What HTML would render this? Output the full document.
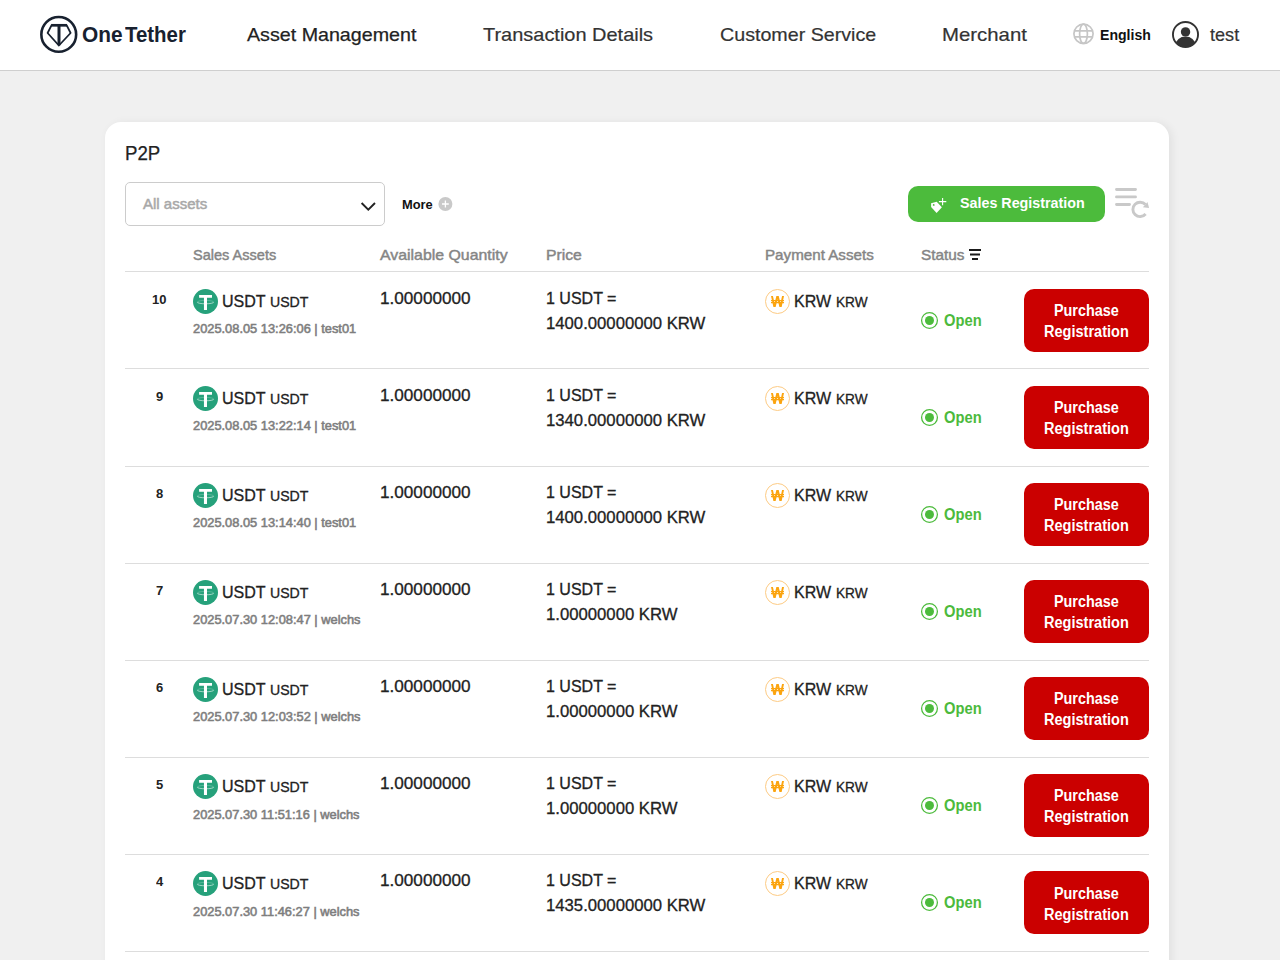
<!DOCTYPE html>
<html lang="en">
<head>
<meta charset="utf-8">
<title>OneTether - P2P</title>
<style>
*{box-sizing:border-box;margin:0;padding:0}
html,body{width:1280px;height:960px;overflow:hidden}
body{background:#f0f0f0;font-family:"Liberation Sans",sans-serif;position:relative}
.t{position:absolute;white-space:nowrap;transform-origin:0 0;display:block}
.abs{position:absolute}
header{position:absolute;left:0;top:0;width:1280px;height:71px;z-index:2;background:#fff;border-bottom:1px solid #cfcfcf}
.card{position:absolute;left:105px;top:122px;width:1064px;height:900px;background:#fff;border-radius:16px;box-shadow:3px 1px 10px rgba(0,0,0,.065)}
.select{position:absolute;left:125px;top:182px;width:260px;height:44px;border:1px solid #ccc;border-radius:5px;background:#fff}
.btn-sale{position:absolute;left:908px;top:186px;width:197px;height:36px;border-radius:10px;background:#4cbb3c}
.hr{position:absolute;left:125px;width:1024px;height:1px;background:#ddd}
.btn-buy{position:absolute;left:1024px;width:125px;height:63px;border-radius:10px;background:#cb0000}
svg{position:absolute;overflow:visible}
</style>
</head>
<body>
<header>
<svg style="left:38px;top:14px" width="42" height="42" viewBox="38 14 42 42"><circle cx="58.75" cy="34.4" r="17.4" fill="none" stroke="#18212f" stroke-width="2.6"/><path d="M51.6 25.2h15l4 7.8-11.7 12.5L47.6 33z" fill="none" stroke="#18212f" stroke-width="1.8" stroke-linejoin="round"/><path d="M51.2 25.3h15.8" fill="none" stroke="#18212f" stroke-width="2.7"/><path d="M59 25v20.2" fill="none" stroke="#18212f" stroke-width="3"/></svg>
<svg style="left:1073px;top:23px" width="22" height="22" viewBox="1073 23 22 22" fill="none" stroke="#c6c6c6" stroke-width="1.7"><circle cx="1083.5" cy="33.8" r="9.6"/><ellipse cx="1083.5" cy="33.8" rx="3.9" ry="9.6"/><path d="M1074.6 30.9h17.8M1074.6 36.8h17.8"/></svg>
<svg style="left:1172px;top:20.6px" width="27" height="27" viewBox="0 0 27 27"><defs><clipPath id="uc"><circle cx="13.5" cy="13.5" r="12.6"/></clipPath></defs><circle cx="13.5" cy="13.5" r="12.55" fill="#fff" stroke="#333" stroke-width="1.9"/><g clip-path="url(#uc)" fill="#333"><circle cx="13.55" cy="10.9" r="4.7"/><ellipse cx="13.5" cy="23.9" rx="9.9" ry="8.4"/></g></svg>
<span class="t logo" style="left:81.73px;top:22px;font-size:21.6px;line-height:25px;transform:scaleX(0.9655);color:#18212f;font-weight:700;">One</span>
<span class="t logo" style="left:124.81px;top:22px;font-size:21.6px;line-height:25px;transform:scaleX(0.9452);color:#18212f;font-weight:700;">Tether</span>
<span class="t nav" style="left:247.00px;top:24px;font-size:19.0px;line-height:21px;transform:scaleX(1.0347);color:#222;-webkit-text-stroke:0.25px #222;">Asset Management</span>
<span class="t nav" style="left:483.33px;top:24px;font-size:19.0px;line-height:21px;transform:scaleX(1.0505);color:#333;-webkit-text-stroke:0.2px #333;">Transaction Details</span>
<span class="t nav" style="left:719.87px;top:24px;font-size:19.0px;line-height:21px;transform:scaleX(1.0347);color:#333;-webkit-text-stroke:0.2px #333;">Customer Service</span>
<span class="t nav" style="left:941.79px;top:24px;font-size:19.0px;line-height:21px;transform:scaleX(1.0719);color:#333;-webkit-text-stroke:0.2px #333;">Merchant</span>
<span class="t lang" style="left:1100.28px;top:26px;font-size:15.3px;line-height:17px;transform:scaleX(0.9211);color:#111;font-weight:700;">English</span>
<span class="t nav" style="left:1209.81px;top:24px;font-size:19.0px;line-height:21px;transform:scaleX(0.9524);color:#333;-webkit-text-stroke:0.2px #333;">test</span>
</header>
<div class="card"></div>
<main>
<section class="toolbar">
<div class="select"></div>
<svg style="left:360px;top:198px" width="16" height="14" viewBox="360 198 16 14"><path d="M361.6 203l6.7 6.7 6.7-6.7" fill="none" stroke="#222" stroke-width="1.9"/></svg>
<svg style="left:438px;top:197px" width="15" height="15" viewBox="0 0 15 15"><circle cx="7.4" cy="7" r="7" fill="#c9c9c9"/><path d="M7.4 3.6v6.8M4 7h6.8" stroke="#fff" stroke-width="1.3"/></svg>
<div class="btn-sale"></div>
<svg style="left:928px;top:196px" width="20" height="18" viewBox="928 196 20 18"><path d="M931.1 203.3l5.6-1.5 5.2 5.5-5.3 5.6-5.5-5.9z" fill="#fff"/><circle cx="933.7" cy="204.9" r=".9" fill="#4cbb3c"/><path d="M942.6 197.9v7.4M938.9 201.6h7.4" stroke="#fff" stroke-width="1.1"/></svg>
<svg style="left:1113px;top:186px" width="38" height="34" viewBox="1113 186 38 34"><path d="M1116.5 189.5h19M1116.5 196.9h19M1116.5 204.5h13" stroke="#c9c9c9" stroke-width="2.9" stroke-linecap="round" fill="none"/><path d="M1145.45 204.58A7.2 7.2 0 1 0 1145.6 214.0" fill="none" stroke="#c9c9c9" stroke-width="2.9"/><path d="M1147.5 201.9l1.6 6.2-6.2-.9z" fill="#c9c9c9"/></svg>
<span class="t title" style="left:125.11px;top:142px;font-size:20.0px;line-height:22px;transform:scaleX(0.9328);color:#222;-webkit-text-stroke:0.25px #222;">P2P</span>
<span class="t ph" style="left:143.10px;top:195px;font-size:15.0px;line-height:17px;transform:scaleX(1.0017);color:#a8a8a8;-webkit-text-stroke:0.5px #a8a8a8;">All assets</span>
<span class="t more" style="left:401.75px;top:197px;font-size:13.7px;line-height:15px;transform:scaleX(0.9391);color:#111;font-weight:700;">More</span>
<span class="t btxt" style="left:960.01px;top:195px;font-size:14.8px;line-height:16px;transform:scaleX(0.9664);color:#fff;font-weight:700;">Sales Registration</span>
</section>
<div class="thead">
<span class="t th" style="left:193.17px;top:246px;font-size:15.0px;line-height:17px;transform:scaleX(0.9690);color:#858585;-webkit-text-stroke:0.45px #858585;">Sales Assets</span>
<span class="t th" style="left:380.30px;top:246px;font-size:15.0px;line-height:17px;transform:scaleX(1.0578);color:#858585;-webkit-text-stroke:0.45px #858585;">Available Quantity</span>
<span class="t th" style="left:546.44px;top:246px;font-size:15.0px;line-height:17px;transform:scaleX(1.0485);color:#858585;-webkit-text-stroke:0.45px #858585;">Price</span>
<span class="t th" style="left:764.69px;top:246px;font-size:15.0px;line-height:17px;transform:scaleX(1.0115);color:#858585;-webkit-text-stroke:0.45px #858585;">Payment Assets</span>
<span class="t th" style="left:921.39px;top:246px;font-size:15.0px;line-height:17px;transform:scaleX(1.0236);color:#858585;-webkit-text-stroke:0.45px #858585;">Status</span>
<svg style="left:968px;top:248px" width="14" height="13" viewBox="968 248 14 13"><path d="M969 250h12M970 254.5h10M972 259h6" stroke="#1a1a1a" stroke-width="2" fill="none"/></svg>
<div class="hr" style="top:271px"></div>
</div>
<div class="row">
<svg style="left:193px;top:289px" width="25" height="25" viewBox="0 0 25 25"><circle cx="12.5" cy="12.5" r="12.5" fill="#26a17b"/><path d="M6.1 6.1h12.9v2.7h-5v12.25h-3.05V8.8H6.1z" fill="#fff"/><path d="M4.2 13.1a8.3 1.7 0 0 0 16.6 0" fill="none" stroke="#fff" stroke-opacity=".7" stroke-width=".8"/><path d="M4.2 13.1a8.3 1.7 0 0 1 16.6 0" fill="none" stroke="#fff" stroke-opacity=".3" stroke-width=".7"/></svg>
<svg style="left:765px;top:289px" width="25" height="25" viewBox="0 0 25 25"><defs><clipPath id="wc0"><rect x="4" y="7" width="17" height="10.9"/></clipPath></defs><circle cx="12.5" cy="12.5" r="12" fill="#fff" stroke="#fdcb84" stroke-width="1"/><g clip-path="url(#wc0)" fill="none" stroke="#fba40f"><path d="M6.5 4.8L9.5 18.6 12.55 6.2 15.55 18.6 18.5 4.8" stroke-width="1.9" stroke-linejoin="miter" stroke-miterlimit="10"/><path d="M6 11.6h13M6 13.65h13" stroke-width="1.3"/></g></svg>
<svg style="left:921px;top:312px" width="17" height="17" viewBox="0 0 17 17"><circle cx="8.5" cy="8.5" r="7.9" fill="#fff" stroke="#4cbb3c" stroke-width="1.25"/><circle cx="8.5" cy="8.5" r="4.5" fill="#4cbb3c"/></svg>
<div class="btn-buy" style="top:289px"></div>
<span class="t idx" style="left:152.09px;top:292px;font-size:12.8px;line-height:15px;transform:scaleX(1.0140);color:#222;font-weight:700;">10</span>
<span class="t a1" style="left:221.99px;top:291px;font-size:17.2px;line-height:20px;transform:scaleX(0.9333);color:#222;-webkit-text-stroke:0.32px #222;">USDT</span>
<span class="t a2" style="left:269.88px;top:293px;font-size:15.3px;line-height:17px;transform:scaleX(0.9228);color:#222;-webkit-text-stroke:0.32px #222;">USDT</span>
<span class="t date" style="left:192.88px;top:322px;font-size:12.4px;line-height:14px;transform:scaleX(1.0360);color:#7e7e7e;-webkit-text-stroke:0.55px #7e7e7e;">2025.08.05 13:26:06 | test01</span>
<span class="t qty" style="left:379.80px;top:288px;font-size:17.2px;line-height:20px;transform:scaleX(0.9977);color:#222;-webkit-text-stroke:0.32px #222;">1.00000000</span>
<span class="t p" style="left:546.49px;top:288px;font-size:17.2px;line-height:20px;transform:scaleX(0.9317);color:#222;-webkit-text-stroke:0.32px #222;">1 USDT =</span>
<span class="t p" style="left:546.44px;top:313px;font-size:17.2px;line-height:20px;transform:scaleX(0.9716);color:#222;-webkit-text-stroke:0.32px #222;">1400.00000000 KRW</span>
<span class="t a1" style="left:793.79px;top:291px;font-size:17.2px;line-height:20px;transform:scaleX(0.9327);color:#222;-webkit-text-stroke:0.32px #222;">KRW</span>
<span class="t a2" style="left:835.63px;top:293px;font-size:15.3px;line-height:17px;transform:scaleX(0.8924);color:#222;-webkit-text-stroke:0.32px #222;">KRW</span>
<span class="t open" style="left:943.84px;top:312px;font-size:15.7px;line-height:17px;transform:scaleX(0.9396);color:#4cba3c;font-weight:700;">Open</span>
<span class="t pb" style="left:1053.99px;top:302px;font-size:15.8px;line-height:17px;transform:scaleX(0.9102);color:#fff;font-weight:700;">Purchase</span>
<span class="t pb" style="left:1044.08px;top:323px;font-size:15.8px;line-height:17px;transform:scaleX(0.9199);color:#fff;font-weight:700;">Registration</span>
<div class="hr" style="top:368px"></div>
</div>
<div class="row">
<svg style="left:193px;top:386px" width="25" height="25" viewBox="0 0 25 25"><circle cx="12.5" cy="12.5" r="12.5" fill="#26a17b"/><path d="M6.1 6.1h12.9v2.7h-5v12.25h-3.05V8.8H6.1z" fill="#fff"/><path d="M4.2 13.1a8.3 1.7 0 0 0 16.6 0" fill="none" stroke="#fff" stroke-opacity=".7" stroke-width=".8"/><path d="M4.2 13.1a8.3 1.7 0 0 1 16.6 0" fill="none" stroke="#fff" stroke-opacity=".3" stroke-width=".7"/></svg>
<svg style="left:765px;top:386px" width="25" height="25" viewBox="0 0 25 25"><defs><clipPath id="wc1"><rect x="4" y="7" width="17" height="10.9"/></clipPath></defs><circle cx="12.5" cy="12.5" r="12" fill="#fff" stroke="#fdcb84" stroke-width="1"/><g clip-path="url(#wc1)" fill="none" stroke="#fba40f"><path d="M6.5 4.8L9.5 18.6 12.55 6.2 15.55 18.6 18.5 4.8" stroke-width="1.9" stroke-linejoin="miter" stroke-miterlimit="10"/><path d="M6 11.6h13M6 13.65h13" stroke-width="1.3"/></g></svg>
<svg style="left:921px;top:409px" width="17" height="17" viewBox="0 0 17 17"><circle cx="8.5" cy="8.5" r="7.9" fill="#fff" stroke="#4cbb3c" stroke-width="1.25"/><circle cx="8.5" cy="8.5" r="4.5" fill="#4cbb3c"/></svg>
<div class="btn-buy" style="top:386px"></div>
<span class="t idx" style="left:155.85px;top:389px;font-size:12.8px;line-height:15px;transform:scaleX(1.0140);color:#222;font-weight:700;">9</span>
<span class="t a1" style="left:221.99px;top:388px;font-size:17.2px;line-height:20px;transform:scaleX(0.9333);color:#222;-webkit-text-stroke:0.32px #222;">USDT</span>
<span class="t a2" style="left:269.88px;top:390px;font-size:15.3px;line-height:17px;transform:scaleX(0.9228);color:#222;-webkit-text-stroke:0.32px #222;">USDT</span>
<span class="t date" style="left:192.88px;top:419px;font-size:12.4px;line-height:14px;transform:scaleX(1.0360);color:#7e7e7e;-webkit-text-stroke:0.55px #7e7e7e;">2025.08.05 13:22:14 | test01</span>
<span class="t qty" style="left:379.80px;top:385px;font-size:17.2px;line-height:20px;transform:scaleX(0.9977);color:#222;-webkit-text-stroke:0.32px #222;">1.00000000</span>
<span class="t p" style="left:546.49px;top:385px;font-size:17.2px;line-height:20px;transform:scaleX(0.9317);color:#222;-webkit-text-stroke:0.32px #222;">1 USDT =</span>
<span class="t p" style="left:546.44px;top:410px;font-size:17.2px;line-height:20px;transform:scaleX(0.9716);color:#222;-webkit-text-stroke:0.32px #222;">1340.00000000 KRW</span>
<span class="t a1" style="left:793.79px;top:388px;font-size:17.2px;line-height:20px;transform:scaleX(0.9327);color:#222;-webkit-text-stroke:0.32px #222;">KRW</span>
<span class="t a2" style="left:835.63px;top:390px;font-size:15.3px;line-height:17px;transform:scaleX(0.8924);color:#222;-webkit-text-stroke:0.32px #222;">KRW</span>
<span class="t open" style="left:943.84px;top:409px;font-size:15.7px;line-height:17px;transform:scaleX(0.9396);color:#4cba3c;font-weight:700;">Open</span>
<span class="t pb" style="left:1053.99px;top:399px;font-size:15.8px;line-height:17px;transform:scaleX(0.9102);color:#fff;font-weight:700;">Purchase</span>
<span class="t pb" style="left:1044.08px;top:420px;font-size:15.8px;line-height:17px;transform:scaleX(0.9199);color:#fff;font-weight:700;">Registration</span>
<div class="hr" style="top:466px"></div>
</div>
<div class="row">
<svg style="left:193px;top:483px" width="25" height="25" viewBox="0 0 25 25"><circle cx="12.5" cy="12.5" r="12.5" fill="#26a17b"/><path d="M6.1 6.1h12.9v2.7h-5v12.25h-3.05V8.8H6.1z" fill="#fff"/><path d="M4.2 13.1a8.3 1.7 0 0 0 16.6 0" fill="none" stroke="#fff" stroke-opacity=".7" stroke-width=".8"/><path d="M4.2 13.1a8.3 1.7 0 0 1 16.6 0" fill="none" stroke="#fff" stroke-opacity=".3" stroke-width=".7"/></svg>
<svg style="left:765px;top:483px" width="25" height="25" viewBox="0 0 25 25"><defs><clipPath id="wc2"><rect x="4" y="7" width="17" height="10.9"/></clipPath></defs><circle cx="12.5" cy="12.5" r="12" fill="#fff" stroke="#fdcb84" stroke-width="1"/><g clip-path="url(#wc2)" fill="none" stroke="#fba40f"><path d="M6.5 4.8L9.5 18.6 12.55 6.2 15.55 18.6 18.5 4.8" stroke-width="1.9" stroke-linejoin="miter" stroke-miterlimit="10"/><path d="M6 11.6h13M6 13.65h13" stroke-width="1.3"/></g></svg>
<svg style="left:921px;top:506px" width="17" height="17" viewBox="0 0 17 17"><circle cx="8.5" cy="8.5" r="7.9" fill="#fff" stroke="#4cbb3c" stroke-width="1.25"/><circle cx="8.5" cy="8.5" r="4.5" fill="#4cbb3c"/></svg>
<div class="btn-buy" style="top:483px"></div>
<span class="t idx" style="left:155.80px;top:486px;font-size:12.8px;line-height:15px;transform:scaleX(1.0140);color:#222;font-weight:700;">8</span>
<span class="t a1" style="left:221.99px;top:485px;font-size:17.2px;line-height:20px;transform:scaleX(0.9333);color:#222;-webkit-text-stroke:0.32px #222;">USDT</span>
<span class="t a2" style="left:269.88px;top:487px;font-size:15.3px;line-height:17px;transform:scaleX(0.9228);color:#222;-webkit-text-stroke:0.32px #222;">USDT</span>
<span class="t date" style="left:192.88px;top:516px;font-size:12.4px;line-height:14px;transform:scaleX(1.0360);color:#7e7e7e;-webkit-text-stroke:0.55px #7e7e7e;">2025.08.05 13:14:40 | test01</span>
<span class="t qty" style="left:379.80px;top:482px;font-size:17.2px;line-height:20px;transform:scaleX(0.9977);color:#222;-webkit-text-stroke:0.32px #222;">1.00000000</span>
<span class="t p" style="left:546.49px;top:482px;font-size:17.2px;line-height:20px;transform:scaleX(0.9317);color:#222;-webkit-text-stroke:0.32px #222;">1 USDT =</span>
<span class="t p" style="left:546.44px;top:507px;font-size:17.2px;line-height:20px;transform:scaleX(0.9716);color:#222;-webkit-text-stroke:0.32px #222;">1400.00000000 KRW</span>
<span class="t a1" style="left:793.79px;top:485px;font-size:17.2px;line-height:20px;transform:scaleX(0.9327);color:#222;-webkit-text-stroke:0.32px #222;">KRW</span>
<span class="t a2" style="left:835.63px;top:487px;font-size:15.3px;line-height:17px;transform:scaleX(0.8924);color:#222;-webkit-text-stroke:0.32px #222;">KRW</span>
<span class="t open" style="left:943.84px;top:506px;font-size:15.7px;line-height:17px;transform:scaleX(0.9396);color:#4cba3c;font-weight:700;">Open</span>
<span class="t pb" style="left:1053.99px;top:496px;font-size:15.8px;line-height:17px;transform:scaleX(0.9102);color:#fff;font-weight:700;">Purchase</span>
<span class="t pb" style="left:1044.08px;top:517px;font-size:15.8px;line-height:17px;transform:scaleX(0.9199);color:#fff;font-weight:700;">Registration</span>
<div class="hr" style="top:563px"></div>
</div>
<div class="row">
<svg style="left:193px;top:580px" width="25" height="25" viewBox="0 0 25 25"><circle cx="12.5" cy="12.5" r="12.5" fill="#26a17b"/><path d="M6.1 6.1h12.9v2.7h-5v12.25h-3.05V8.8H6.1z" fill="#fff"/><path d="M4.2 13.1a8.3 1.7 0 0 0 16.6 0" fill="none" stroke="#fff" stroke-opacity=".7" stroke-width=".8"/><path d="M4.2 13.1a8.3 1.7 0 0 1 16.6 0" fill="none" stroke="#fff" stroke-opacity=".3" stroke-width=".7"/></svg>
<svg style="left:765px;top:580px" width="25" height="25" viewBox="0 0 25 25"><defs><clipPath id="wc3"><rect x="4" y="7" width="17" height="10.9"/></clipPath></defs><circle cx="12.5" cy="12.5" r="12" fill="#fff" stroke="#fdcb84" stroke-width="1"/><g clip-path="url(#wc3)" fill="none" stroke="#fba40f"><path d="M6.5 4.8L9.5 18.6 12.55 6.2 15.55 18.6 18.5 4.8" stroke-width="1.9" stroke-linejoin="miter" stroke-miterlimit="10"/><path d="M6 11.6h13M6 13.65h13" stroke-width="1.3"/></g></svg>
<svg style="left:921px;top:603px" width="17" height="17" viewBox="0 0 17 17"><circle cx="8.5" cy="8.5" r="7.9" fill="#fff" stroke="#4cbb3c" stroke-width="1.25"/><circle cx="8.5" cy="8.5" r="4.5" fill="#4cbb3c"/></svg>
<div class="btn-buy" style="top:580px"></div>
<span class="t idx" style="left:155.85px;top:583px;font-size:12.8px;line-height:15px;transform:scaleX(1.0140);color:#222;font-weight:700;">7</span>
<span class="t a1" style="left:221.99px;top:582px;font-size:17.2px;line-height:20px;transform:scaleX(0.9333);color:#222;-webkit-text-stroke:0.32px #222;">USDT</span>
<span class="t a2" style="left:269.88px;top:584px;font-size:15.3px;line-height:17px;transform:scaleX(0.9228);color:#222;-webkit-text-stroke:0.32px #222;">USDT</span>
<span class="t date" style="left:192.88px;top:613px;font-size:12.4px;line-height:14px;transform:scaleX(1.0360);color:#7e7e7e;-webkit-text-stroke:0.55px #7e7e7e;">2025.07.30 12:08:47 | welchs</span>
<span class="t qty" style="left:379.80px;top:579px;font-size:17.2px;line-height:20px;transform:scaleX(0.9977);color:#222;-webkit-text-stroke:0.32px #222;">1.00000000</span>
<span class="t p" style="left:546.49px;top:579px;font-size:17.2px;line-height:20px;transform:scaleX(0.9317);color:#222;-webkit-text-stroke:0.32px #222;">1 USDT =</span>
<span class="t p" style="left:546.44px;top:604px;font-size:17.2px;line-height:20px;transform:scaleX(0.9716);color:#222;-webkit-text-stroke:0.32px #222;">1.00000000 KRW</span>
<span class="t a1" style="left:793.79px;top:582px;font-size:17.2px;line-height:20px;transform:scaleX(0.9327);color:#222;-webkit-text-stroke:0.32px #222;">KRW</span>
<span class="t a2" style="left:835.63px;top:584px;font-size:15.3px;line-height:17px;transform:scaleX(0.8924);color:#222;-webkit-text-stroke:0.32px #222;">KRW</span>
<span class="t open" style="left:943.84px;top:603px;font-size:15.7px;line-height:17px;transform:scaleX(0.9396);color:#4cba3c;font-weight:700;">Open</span>
<span class="t pb" style="left:1053.99px;top:593px;font-size:15.8px;line-height:17px;transform:scaleX(0.9102);color:#fff;font-weight:700;">Purchase</span>
<span class="t pb" style="left:1044.08px;top:614px;font-size:15.8px;line-height:17px;transform:scaleX(0.9199);color:#fff;font-weight:700;">Registration</span>
<div class="hr" style="top:660px"></div>
</div>
<div class="row">
<svg style="left:193px;top:677px" width="25" height="25" viewBox="0 0 25 25"><circle cx="12.5" cy="12.5" r="12.5" fill="#26a17b"/><path d="M6.1 6.1h12.9v2.7h-5v12.25h-3.05V8.8H6.1z" fill="#fff"/><path d="M4.2 13.1a8.3 1.7 0 0 0 16.6 0" fill="none" stroke="#fff" stroke-opacity=".7" stroke-width=".8"/><path d="M4.2 13.1a8.3 1.7 0 0 1 16.6 0" fill="none" stroke="#fff" stroke-opacity=".3" stroke-width=".7"/></svg>
<svg style="left:765px;top:677px" width="25" height="25" viewBox="0 0 25 25"><defs><clipPath id="wc4"><rect x="4" y="7" width="17" height="10.9"/></clipPath></defs><circle cx="12.5" cy="12.5" r="12" fill="#fff" stroke="#fdcb84" stroke-width="1"/><g clip-path="url(#wc4)" fill="none" stroke="#fba40f"><path d="M6.5 4.8L9.5 18.6 12.55 6.2 15.55 18.6 18.5 4.8" stroke-width="1.9" stroke-linejoin="miter" stroke-miterlimit="10"/><path d="M6 11.6h13M6 13.65h13" stroke-width="1.3"/></g></svg>
<svg style="left:921px;top:700px" width="17" height="17" viewBox="0 0 17 17"><circle cx="8.5" cy="8.5" r="7.9" fill="#fff" stroke="#4cbb3c" stroke-width="1.25"/><circle cx="8.5" cy="8.5" r="4.5" fill="#4cbb3c"/></svg>
<div class="btn-buy" style="top:677px"></div>
<span class="t idx" style="left:155.85px;top:680px;font-size:12.8px;line-height:15px;transform:scaleX(1.0140);color:#222;font-weight:700;">6</span>
<span class="t a1" style="left:221.99px;top:679px;font-size:17.2px;line-height:20px;transform:scaleX(0.9333);color:#222;-webkit-text-stroke:0.32px #222;">USDT</span>
<span class="t a2" style="left:269.88px;top:681px;font-size:15.3px;line-height:17px;transform:scaleX(0.9228);color:#222;-webkit-text-stroke:0.32px #222;">USDT</span>
<span class="t date" style="left:192.88px;top:710px;font-size:12.4px;line-height:14px;transform:scaleX(1.0360);color:#7e7e7e;-webkit-text-stroke:0.55px #7e7e7e;">2025.07.30 12:03:52 | welchs</span>
<span class="t qty" style="left:379.80px;top:676px;font-size:17.2px;line-height:20px;transform:scaleX(0.9977);color:#222;-webkit-text-stroke:0.32px #222;">1.00000000</span>
<span class="t p" style="left:546.49px;top:676px;font-size:17.2px;line-height:20px;transform:scaleX(0.9317);color:#222;-webkit-text-stroke:0.32px #222;">1 USDT =</span>
<span class="t p" style="left:546.44px;top:701px;font-size:17.2px;line-height:20px;transform:scaleX(0.9716);color:#222;-webkit-text-stroke:0.32px #222;">1.00000000 KRW</span>
<span class="t a1" style="left:793.79px;top:679px;font-size:17.2px;line-height:20px;transform:scaleX(0.9327);color:#222;-webkit-text-stroke:0.32px #222;">KRW</span>
<span class="t a2" style="left:835.63px;top:681px;font-size:15.3px;line-height:17px;transform:scaleX(0.8924);color:#222;-webkit-text-stroke:0.32px #222;">KRW</span>
<span class="t open" style="left:943.84px;top:700px;font-size:15.7px;line-height:17px;transform:scaleX(0.9396);color:#4cba3c;font-weight:700;">Open</span>
<span class="t pb" style="left:1053.99px;top:690px;font-size:15.8px;line-height:17px;transform:scaleX(0.9102);color:#fff;font-weight:700;">Purchase</span>
<span class="t pb" style="left:1044.08px;top:711px;font-size:15.8px;line-height:17px;transform:scaleX(0.9199);color:#fff;font-weight:700;">Registration</span>
<div class="hr" style="top:757px"></div>
</div>
<div class="row">
<svg style="left:193px;top:774px" width="25" height="25" viewBox="0 0 25 25"><circle cx="12.5" cy="12.5" r="12.5" fill="#26a17b"/><path d="M6.1 6.1h12.9v2.7h-5v12.25h-3.05V8.8H6.1z" fill="#fff"/><path d="M4.2 13.1a8.3 1.7 0 0 0 16.6 0" fill="none" stroke="#fff" stroke-opacity=".7" stroke-width=".8"/><path d="M4.2 13.1a8.3 1.7 0 0 1 16.6 0" fill="none" stroke="#fff" stroke-opacity=".3" stroke-width=".7"/></svg>
<svg style="left:765px;top:774px" width="25" height="25" viewBox="0 0 25 25"><defs><clipPath id="wc5"><rect x="4" y="7" width="17" height="10.9"/></clipPath></defs><circle cx="12.5" cy="12.5" r="12" fill="#fff" stroke="#fdcb84" stroke-width="1"/><g clip-path="url(#wc5)" fill="none" stroke="#fba40f"><path d="M6.5 4.8L9.5 18.6 12.55 6.2 15.55 18.6 18.5 4.8" stroke-width="1.9" stroke-linejoin="miter" stroke-miterlimit="10"/><path d="M6 11.6h13M6 13.65h13" stroke-width="1.3"/></g></svg>
<svg style="left:921px;top:797px" width="17" height="17" viewBox="0 0 17 17"><circle cx="8.5" cy="8.5" r="7.9" fill="#fff" stroke="#4cbb3c" stroke-width="1.25"/><circle cx="8.5" cy="8.5" r="4.5" fill="#4cbb3c"/></svg>
<div class="btn-buy" style="top:774px"></div>
<span class="t idx" style="left:155.85px;top:777px;font-size:12.8px;line-height:15px;transform:scaleX(1.0140);color:#222;font-weight:700;">5</span>
<span class="t a1" style="left:221.99px;top:776px;font-size:17.2px;line-height:20px;transform:scaleX(0.9333);color:#222;-webkit-text-stroke:0.32px #222;">USDT</span>
<span class="t a2" style="left:269.88px;top:778px;font-size:15.3px;line-height:17px;transform:scaleX(0.9228);color:#222;-webkit-text-stroke:0.32px #222;">USDT</span>
<span class="t date" style="left:192.88px;top:808px;font-size:12.4px;line-height:14px;transform:scaleX(1.0360);color:#7e7e7e;-webkit-text-stroke:0.55px #7e7e7e;">2025.07.30 11:51:16 | welchs</span>
<span class="t qty" style="left:379.80px;top:773px;font-size:17.2px;line-height:20px;transform:scaleX(0.9977);color:#222;-webkit-text-stroke:0.32px #222;">1.00000000</span>
<span class="t p" style="left:546.49px;top:773px;font-size:17.2px;line-height:20px;transform:scaleX(0.9317);color:#222;-webkit-text-stroke:0.32px #222;">1 USDT =</span>
<span class="t p" style="left:546.44px;top:798px;font-size:17.2px;line-height:20px;transform:scaleX(0.9716);color:#222;-webkit-text-stroke:0.32px #222;">1.00000000 KRW</span>
<span class="t a1" style="left:793.79px;top:776px;font-size:17.2px;line-height:20px;transform:scaleX(0.9327);color:#222;-webkit-text-stroke:0.32px #222;">KRW</span>
<span class="t a2" style="left:835.63px;top:778px;font-size:15.3px;line-height:17px;transform:scaleX(0.8924);color:#222;-webkit-text-stroke:0.32px #222;">KRW</span>
<span class="t open" style="left:943.84px;top:797px;font-size:15.7px;line-height:17px;transform:scaleX(0.9396);color:#4cba3c;font-weight:700;">Open</span>
<span class="t pb" style="left:1053.99px;top:787px;font-size:15.8px;line-height:17px;transform:scaleX(0.9102);color:#fff;font-weight:700;">Purchase</span>
<span class="t pb" style="left:1044.08px;top:808px;font-size:15.8px;line-height:17px;transform:scaleX(0.9199);color:#fff;font-weight:700;">Registration</span>
<div class="hr" style="top:854px"></div>
</div>
<div class="row">
<svg style="left:193px;top:871px" width="25" height="25" viewBox="0 0 25 25"><circle cx="12.5" cy="12.5" r="12.5" fill="#26a17b"/><path d="M6.1 6.1h12.9v2.7h-5v12.25h-3.05V8.8H6.1z" fill="#fff"/><path d="M4.2 13.1a8.3 1.7 0 0 0 16.6 0" fill="none" stroke="#fff" stroke-opacity=".7" stroke-width=".8"/><path d="M4.2 13.1a8.3 1.7 0 0 1 16.6 0" fill="none" stroke="#fff" stroke-opacity=".3" stroke-width=".7"/></svg>
<svg style="left:765px;top:871px" width="25" height="25" viewBox="0 0 25 25"><defs><clipPath id="wc6"><rect x="4" y="7" width="17" height="10.9"/></clipPath></defs><circle cx="12.5" cy="12.5" r="12" fill="#fff" stroke="#fdcb84" stroke-width="1"/><g clip-path="url(#wc6)" fill="none" stroke="#fba40f"><path d="M6.5 4.8L9.5 18.6 12.55 6.2 15.55 18.6 18.5 4.8" stroke-width="1.9" stroke-linejoin="miter" stroke-miterlimit="10"/><path d="M6 11.6h13M6 13.65h13" stroke-width="1.3"/></g></svg>
<svg style="left:921px;top:894px" width="17" height="17" viewBox="0 0 17 17"><circle cx="8.5" cy="8.5" r="7.9" fill="#fff" stroke="#4cbb3c" stroke-width="1.25"/><circle cx="8.5" cy="8.5" r="4.5" fill="#4cbb3c"/></svg>
<div class="btn-buy" style="top:871px"></div>
<span class="t idx" style="left:155.80px;top:874px;font-size:12.8px;line-height:15px;transform:scaleX(1.0140);color:#222;font-weight:700;">4</span>
<span class="t a1" style="left:221.99px;top:873px;font-size:17.2px;line-height:20px;transform:scaleX(0.9333);color:#222;-webkit-text-stroke:0.32px #222;">USDT</span>
<span class="t a2" style="left:269.88px;top:875px;font-size:15.3px;line-height:17px;transform:scaleX(0.9228);color:#222;-webkit-text-stroke:0.32px #222;">USDT</span>
<span class="t date" style="left:192.88px;top:905px;font-size:12.4px;line-height:14px;transform:scaleX(1.0360);color:#7e7e7e;-webkit-text-stroke:0.55px #7e7e7e;">2025.07.30 11:46:27 | welchs</span>
<span class="t qty" style="left:379.80px;top:870px;font-size:17.2px;line-height:20px;transform:scaleX(0.9977);color:#222;-webkit-text-stroke:0.32px #222;">1.00000000</span>
<span class="t p" style="left:546.49px;top:870px;font-size:17.2px;line-height:20px;transform:scaleX(0.9317);color:#222;-webkit-text-stroke:0.32px #222;">1 USDT =</span>
<span class="t p" style="left:546.44px;top:895px;font-size:17.2px;line-height:20px;transform:scaleX(0.9716);color:#222;-webkit-text-stroke:0.32px #222;">1435.00000000 KRW</span>
<span class="t a1" style="left:793.79px;top:873px;font-size:17.2px;line-height:20px;transform:scaleX(0.9327);color:#222;-webkit-text-stroke:0.32px #222;">KRW</span>
<span class="t a2" style="left:835.63px;top:875px;font-size:15.3px;line-height:17px;transform:scaleX(0.8924);color:#222;-webkit-text-stroke:0.32px #222;">KRW</span>
<span class="t open" style="left:943.84px;top:894px;font-size:15.7px;line-height:17px;transform:scaleX(0.9396);color:#4cba3c;font-weight:700;">Open</span>
<span class="t pb" style="left:1053.99px;top:885px;font-size:15.8px;line-height:17px;transform:scaleX(0.9102);color:#fff;font-weight:700;">Purchase</span>
<span class="t pb" style="left:1044.08px;top:906px;font-size:15.8px;line-height:17px;transform:scaleX(0.9199);color:#fff;font-weight:700;">Registration</span>
<div class="hr" style="top:951px"></div>
</div>
</main>
</body>
</html>
